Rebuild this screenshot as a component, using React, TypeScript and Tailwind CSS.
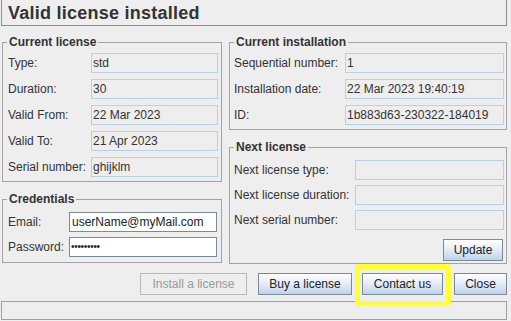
import React from "react";

function Field({ value, w }: { value?: string; w?: string }) {
  return (
    <div
      className={`h-[20px] flex-1 border border-[#b8cfe5] pl-[1px] leading-[18px] whitespace-nowrap overflow-hidden ${w ?? ""}`}
    >
      {value ?? ""}
    </div>
  );
}

function Row({ label, value, labelW }: { label: string; value?: string; labelW: string }) {
  return (
    <div className="flex items-center h-[20px]">
      <div className={`${labelW} shrink-0 whitespace-nowrap`}>{label}</div>
      <Field value={value} />
    </div>
  );
}

function Group({ title, children, className }: { title: string; children: React.ReactNode; className?: string }) {
  return (
    <fieldset className={`border border-[#a3a3a3] m-0 p-0 min-w-0 ${className ?? ""}`}>
      <legend className="ml-[4px] px-[2px] font-bold leading-[14px] text-[#333]">{title}</legend>
      {children}
    </fieldset>
  );
}

function Btn({ children, className, disabled }: { children: React.ReactNode; className?: string; disabled?: boolean }) {
  return (
    <div
      className={`h-[22px] flex items-center justify-center border whitespace-nowrap ${
        disabled
          ? "border-[#b8b8b8] text-[#999] bg-[#eeeeee]"
          : "border-[#7a8a99] text-[#222] bg-linear-to-b from-[#ffffff] via-[#e3ecf6] to-[#bfd2e8]"
      } ${className ?? ""}`}
    >
      {children}
    </div>
  );
}

export default function App() {
  return (
    <div className="relative w-[511px] h-[321px] overflow-hidden bg-[#eeeeee] text-[12px] text-[#333] font-['Liberation_Sans',Arial,sans-serif]">
      <div className="ml-[1px] w-[506px] h-[26px] border-x border-b border-[#8e8e8e] pl-[6px] pt-[3px] text-[18px] leading-[21px] font-bold tracking-[0.25px] text-[#333]">
        Valid license installed
      </div>

      <div className="flex items-start ml-[2px] mt-[9px] gap-[7px]">
        <div className="w-[220px] flex flex-col">
          <Group title="Current license">
            <div className="pl-[5px] pr-[3px] pt-[4px] pb-[4px] flex flex-col gap-[6px]">
              <Row label="Type:" value="std" labelW="w-[83px]" />
              <Row label="Duration:" value="30" labelW="w-[83px]" />
              <Row label="Valid From:" value="22 Mar 2023" labelW="w-[83px]" />
              <Row label="Valid To:" value="21 Apr 2023" labelW="w-[83px]" />
              <Row label="Serial number:" value="ghijklm" labelW="w-[83px]" />
            </div>
          </Group>
          <Group title="Credentials" className="mt-[10px]">
            <div className="pl-[5px] pr-[4px] pt-[6px] pb-[5px] flex flex-col gap-[5px]">
              <div className="flex items-center h-[20px]">
                <div className="w-[61px] shrink-0">Email:</div>
                <div className="h-[20px] flex-1 bg-white border border-[#7a8a99] pl-[2px] leading-[18px] text-[#222]">
                  userName@myMail.com
                </div>
              </div>
              <div className="flex items-center h-[20px]">
                <div className="w-[61px] shrink-0">Password:</div>
                <div className="h-[20px] flex-1 bg-white border border-[#7a8a99] pl-[1px] leading-[17px] text-[10px] tracking-[-0.3px] text-[#222]">
                  •••••••••
                </div>
              </div>
            </div>
          </Group>
        </div>

        <div className="w-[278px] flex flex-col">
          <Group title="Current installation">
            <div className="pl-[4px] pr-[2px] pt-[4px] pb-[4px] flex flex-col gap-[6px]">
              <Row label="Sequential number:" value="1" labelW="w-[111px]" />
              <Row label="Installation date:" value="22 Mar 2023 19:40:19" labelW="w-[111px]" />
              <Row label="ID:" value="1b883d63-230322-184019" labelW="w-[111px]" />
            </div>
          </Group>
          <Group title="Next license" className="mt-[10px]">
            <div className="pl-[4px] pr-[2px] pt-[6px] pb-[2px] flex flex-col">
              <div className="flex flex-col gap-[5px]">
                <Row label="Next license type:" labelW="w-[121px]" />
                <Row label="Next license duration:" labelW="w-[121px]" />
                <Row label="Next serial number:" labelW="w-[121px]" />
              </div>
              <div className="flex justify-end mt-[9px] mr-[1px]">
                <Btn className="w-[60px]">Update</Btn>
              </div>
            </div>
          </Group>
        </div>
      </div>

      <div className="w-[507px] flex justify-end mt-[9px]">
        <Btn disabled className="w-[107px]">Install a license</Btn>
        <Btn className="w-[94px] ml-[11px]">Buy a license</Btn>
        <Btn className="w-[81px] ml-[10px]">Contact us</Btn>
        <Btn className="w-[53px] ml-[11px]">Close</Btn>
      </div>

      <div className="ml-[1px] mt-[6px] w-[506px] h-[19px] border border-[#a0a0a0]" />

      <div className="absolute left-[355px] top-[264px] w-[96px] h-[42px] border-[5px] border-[#ffff33] rounded-[4px]" />
    </div>
  );
}
